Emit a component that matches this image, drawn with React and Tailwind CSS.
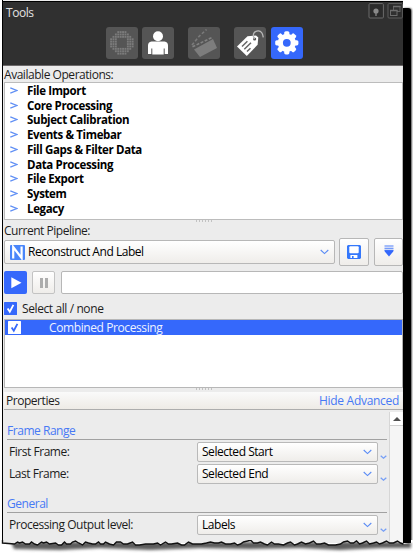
import React from "react";

const operations = [
  "File Import",
  "Core Processing",
  "Subject Calibration",
  "Events & Timebar",
  "Fill Gaps & Filter Data",
  "Data Processing",
  "File Export",
  "System",
  "Legacy",
];

function Chevron({ className = "" }) {
  return (
    <svg width="9" height="6" viewBox="0 0 9 6" className={className}>
      <path d="M0.7 1 L4.5 4.6 L8.3 1" fill="none" stroke="#5b8cf5" strokeWidth="1.1" />
    </svg>
  );
}

function Tool({ active, className = "", children }) {
  return (
    <div className={`h-[32px] w-[32px] rounded-[3px] ${active ? "bg-[#3568fb]" : "bg-[#555]"} ${className}`}>
      <svg width="32" height="32" viewBox="0 0 32 32">{children}</svg>
    </div>
  );
}

// Octagonal ring of small square dots
function RingIcon() {
  const steps = [-10.8, -8.4, -6, -3.6, -1.2, 1.2, 3.6, 6, 8.4, 10.8];
  const dots = [];
  for (const y of steps) {
    for (const x of steps) {
      if (Math.abs(x) + Math.abs(y) < 15 && Math.hypot(x, y) > 5.5) {
        dots.push(<rect key={`${x}:${y}`} x={x + 14.9} y={y + 14.9} width="1.9" height="1.9" />);
      }
    }
  }
  return <g fill="#7b7b7b">{dots}</g>;
}

function Grip() {
  return (
    <div className="flex h-[4px] items-start justify-center gap-[2px] pl-[2px]">
      {[0, 1, 2, 3, 4, 5].map((i) => (
        <span key={i} className="h-[2px] w-px bg-[#c2c2c2]" />
      ))}
    </div>
  );
}

function Check({ inverse }) {
  return (
    <svg width="13" height="13" viewBox="0 0 13 13" className="shrink-0">
      <rect width="13" height="13" rx="0.5" fill={inverse ? "#fff" : "#3568fb"} />
      <path d="M3.6 6.4 L5.8 9.7 L9.4 2.8" fill="none" stroke={inverse ? "#3568fb" : "#fff"} strokeWidth="1.8" />
    </svg>
  );
}

function Property({ label, value }) {
  return (
    <div className="flex h-[20px] pl-[2px]">
      <span className="w-[188px] pt-[2px] leading-[16px]">{label}</span>
      <div className="flex h-[20px] w-[181px] items-center justify-between rounded-[2px] border border-[#b9b9b9] bg-linear-to-b from-white to-[#efedea] pr-[5px] pl-[4px] text-black">
        <span>{value}</span>
        <Chevron />
      </div>
      <svg width="7" height="5" viewBox="0 0 7 5" className="mt-[13px] ml-[2px]">
        <path d="M0.7 0.8 L3.5 3.2 L6.3 0.8" fill="none" stroke="#759ef6" strokeWidth="1.3" />
      </svg>
    </div>
  );
}

const tornEdge =
  "L12 4 L15 2 L17 3 L20 2 L23 4 L27 4 L29 2 L32 4 L35 5 L39 2 L41 3 L44 2 L47 4 L53 3 L56 5 L59 5 L62 2 L64 4 L68 4 L70 2 L73 1 L76 3 L80 5 L83 2 L86 3 L90 4 L93 4 L96 2 L98 4 L101 4 L103 2 L107 4 L111 5 L114 2 L118 2 L121 4 L125 4 L130 2 L133 5 L137 5 L143 4 L151 4 L155 3 L158 5 L163 2 L166 4 L169 4 L175 3 L179 5 L182 5 L186 2 L190 4 L194 4 L199 4 L204 3 L208 2 L212 3 L216 3 L219 2 L223 4 L228 4 L232 3 L235 5 L238 4 L241 2 L245 1 L248 0 L251 3 L255 3 L258 2 L262 4 L265 5 L269 2 L272 4 L276 4 L281 5 L285 3 L288 2 L292 5 L295 4 L299 2 L303 4 L307 3 L311 1 L314 4 L318 4 L322 3 L326 5 L333 5 L338 4 L341 2 L345 1 L348 3 L351 3 L354 1 L357 4 L360 3 L364 1 L367 4 L371 3 L374 2 L377 4 L380 3 L384 1 L387 3 L391 3 L395 1 L398 3 L401 4";

export default function App() {
  return (
    <div className="relative h-[556px] w-[413px] overflow-hidden bg-white font-['Open_Sans','Noto_Sans',sans-serif] text-[12px] tracking-[-0.46px] whitespace-nowrap text-[#1d1d1d]">
      <div className="flex h-[543px]">
        <div className="ml-[2px] h-[543px] w-[401px] shrink-0 overflow-hidden border-l border-black bg-[#ececec]">
          <header className="mt-px h-[65px] border-t border-b border-t-black border-b-[#6c696a] bg-[#303030]">
            <div className="flex h-[25px] justify-between">
              <span className="pt-[2px] pl-[3px] leading-[17px] text-[#e2e2e2]">Tools</span>
              <div className="flex gap-[3px] pt-[1px]">
                <svg width="16" height="16" viewBox="0 0 16 16">
                  <rect x="1" y="0.6" width="14.4" height="14.4" rx="1" fill="#2b2b2b" stroke="#6b6b6b" />
                  <circle cx="8" cy="8" r="2.6" fill="#8a8a8a" />
                  <path d="M8 8 V13" stroke="#8a8a8a" strokeWidth="1.3" />
                </svg>
                <svg width="16" height="16" viewBox="0 0 16 16">
                  <rect x="1" y="0.6" width="14.4" height="14.4" rx="1" fill="#2b2b2b" stroke="#5d5d5d" />
                  <rect x="6.5" y="3.5" width="6.5" height="5" fill="#303030" stroke="#606060" />
                  <rect x="3.5" y="7.5" width="6.5" height="5" fill="#303030" stroke="#6d6d6d" />
                  <path d="M3 7.5h7.5M6 3.5h7.5" stroke="#6d6d6d" strokeWidth="1.4" />
                </svg>
              </div>
            </div>
            <div className="flex pl-[103px]">
              <Tool><RingIcon /></Tool>
              <Tool className="ml-[4px]">
                <g fill="#fff">
                  <circle cx="16" cy="9.3" r="5" />
                  <path d="M9.5 14.5 H22.5 Q26 15 26 18.5 V27 H22.7 V21.5 H21.7 V27.5 H10.3 V21.5 H9.3 V27 H6 V18.5 Q6 15 9.5 14.5Z" />
                </g>
              </Tool>
              <Tool className="ml-[14px]">
                <path d="M6 22.5 L25 12 L29 21 L12 30Z" fill="#7d7d7d" />
                <path d="M4.5 19.8 L24 10.5" stroke="#828282" strokeWidth="1.6" strokeDasharray="3 1.5" />
                <path d="M4 18 L11 9.5 L18.5 2.5" fill="none" stroke="#7b7b7b" strokeWidth="1.6" strokeDasharray="3 2" />
              </Tool>
              <Tool className="ml-[14px]">
                <path d="M3 19.5 L13.5 9.2 L22 8.6 L24.3 10.5 L23.6 17.8 L12.8 29Z" fill="#fff" />
                <circle cx="20.6" cy="12" r="1.6" fill="#555" />
                <path d="M8 19.5 L13.4 14.3 M10.3 22.2 L17 15.8 M13 24.5 L16.5 21.2" stroke="#666" strokeWidth="1.5" />
                <path d="M20.5 12 C17.5 7 21 3.5 24.5 3.8 C27 4 28.8 6.5 29.3 10.3" fill="none" stroke="#b9b9b9" strokeWidth="1.3" />
              </Tool>
              <Tool active className="ml-[5px]">
                <circle cx="15.8" cy="15.8" r="6.5" fill="none" stroke="#fff" strokeWidth="5.2" />
                {[0, 45, 90, 135, 180, 225, 270, 315].map((a) => (
                  <rect key={a} x="13.2" y="4.2" width="5.2" height="5" rx="1.6" fill="#fff" transform={`rotate(${a} 15.8 15.8)`} />
                ))}
              </Tool>
            </div>
          </header>

          <div className="h-[16px] pl-px leading-[18px]">Available Operations:</div>
          <div className="ml-px h-[138px] w-[399px] border border-[#bcbcbc] bg-white">
            {operations.map((name) => (
              <div key={name} className="flex h-[14.75px] items-center text-[11.5px] font-bold tracking-[-0.37px] text-black">
                <svg width="8" height="7" viewBox="0 0 8 7" className="mr-[9px] ml-[5px]">
                  <path d="M0.3 0.8 L6.8 3.5 L0.3 6.2" fill="none" stroke="#6190f5" strokeWidth="1.3" />
                </svg>
                {name}
              </div>
            ))}
          </div>
          <Grip />
          <div className="h-[14px] pl-px leading-[14px]">Current Pipeline:</div>
          <div className="flex h-[28px] items-center pl-px">
            <div className="flex h-[24px] w-[331px] items-center rounded-[2px] border border-[#b7b7b7] bg-linear-to-b from-white to-[#efedea] pr-[5px] pl-[5px] text-black">
              <svg width="15" height="15" viewBox="0 0 15 15" className="mr-[3px]">
                <rect width="15" height="15" rx="1" fill="#4a86fa" />
                <path d="M3.2 13.5 V2 L11.6 13 V1.5" fill="none" stroke="#fff" strokeWidth="2.2" />
              </svg>
              <span className="flex-1">Reconstruct And Label</span>
              <Chevron />
            </div>
            <div className="ml-[4px] flex h-[28px] w-[30px] items-center justify-center rounded-[2px] border border-[#b7b7b7] bg-linear-to-b from-white to-[#efedea]">
              <svg width="14" height="14" viewBox="0 0 14 14">
                <path d="M1 0H13L14 1V13L13 14H1L0 13V1Z" fill="#3578fb" />
                <rect x="2.3" y="1.2" width="9.4" height="7" rx="1" fill="#fff" />
                <rect x="3.4" y="10" width="7" height="3" fill="#fff" />
                <rect x="5" y="11" width="1.6" height="2" fill="#3578fb" />
              </svg>
            </div>
            <div className="ml-[5px] flex h-[28px] w-[29px] items-center justify-center rounded-[2px] border border-[#b7b7b7] bg-linear-to-b from-white to-[#efedea]">
              <svg width="10" height="12" viewBox="0 0 10 12" className="mb-[2px]">
                <path d="M0.5 1H9.5M0.5 3.2H9.5M0.5 5.4H9.5" stroke="#4a7cfa" strokeWidth="1.1" />
                <path d="M0.8 5.4H9.2V6.4L5 11.6L0.8 6.4Z" fill="#3568fb" />
              </svg>
            </div>
          </div>
          <div className="mt-[5px] flex h-[23px] pl-px">
            <div className="h-[23px] w-[23px] rounded-[2px] bg-[#3568fb]">
              <svg width="23" height="23" viewBox="0 0 23 23"><path d="M7.3 6.2 L17.5 11.7 L7.3 17.2Z" fill="#fff" /></svg>
            </div>
            <div className="ml-[5px] flex h-[23px] w-[23px] items-center justify-center gap-[2px] rounded-[2px] border border-[#c3c3c3] bg-linear-to-b from-white to-[#efedea]">
              <span className="h-[10px] w-[3px] bg-[#adadad]" />
              <span className="h-[10px] w-[3px] bg-[#adadad]" />
            </div>
            <div className="ml-[6px] h-[23px] w-[342px] rounded-[2px] border border-[#b7b7b7] bg-white" />
          </div>
          <div className="mt-[8px] flex h-[13px] items-center gap-[5px] pl-px">
            <Check />
            <span className="tracking-[-0.4px]">Select all / none</span>
          </div>
          <div className="mt-[4px] ml-px h-[69px] w-[399px] border border-[#b7b7b7] bg-white">
            <div className="flex h-[15px] items-center bg-[#3568fb] pl-[3px] text-[#eef3ff]">
              <Check inverse />
              <span className="ml-[28px] tracking-[-0.4px]">Combined Processing</span>
            </div>
          </div>
          <Grip />
          <div className="ml-px flex h-[18px] items-center justify-between border-b border-[#adadad] bg-linear-to-b from-[#fafafa] to-[#eeebe6] pr-[4px] pl-[2px]">
            <span>Properties</span>
            <span className="tracking-[-0.3px] text-[#4779f5]">Hide Advanced</span>
          </div>
          <div className="flex h-[134px]">
            <div className="w-[386px] pl-[4px]">
              <div className="mt-[13px] h-[17px] w-[380px] border-b border-[#a1a1a1] leading-[16px] text-[#4779f5]">Frame Range</div>
              <div className="mt-[2px]"><Property label="First Frame:" value="Selected Start" /></div>
              <div className="mt-[2px]"><Property label="Last Frame:" value="Selected End" /></div>
              <div className="mt-[11px] h-[18px] w-[380px] border-b border-[#a1a1a1] leading-[18px] text-[#4779f5]">General</div>
              <div className="mt-[2px]"><Property label="Processing Output level:" value="Labels" /></div>
            </div>
            <div className="mt-[2px] w-[14px] border-l border-[#d6d6d6] bg-[#f5f5f5]">
              <div className="flex h-[14px] items-center justify-center border-b border-[#d0d0d0] bg-white">
                <svg width="8" height="4" viewBox="0 0 8 4"><path d="M0 4L4 0L8 4Z" fill="#505050" /></svg>
              </div>
            </div>
          </div>
        </div>
        <div className="mt-[8px] h-[535px] w-[8px] rounded-tr-[3px] bg-black shadow-[1px_0_2px_#555]" />
      </div>
      <svg width="413" height="16" viewBox="0 0 413 16" className="absolute top-[540px] left-0">
        <defs>
          <filter id="soft" x="-5%" y="-50%" width="110%" height="200%"><feGaussianBlur stdDeviation="1.4" /></filter>
          <clipPath id="below"><path d={`M0 3 ${tornEdge} L413 2 V16 H0Z`} transform="translate(2 0)" /></clipPath>
        </defs>
        <path d={`M0 3 ${tornEdge} L401 0 L413 0 V16 H0Z`} transform="translate(2 0)" fill="#fff" />
        <path d="M403 0 H411 V3 H403Z" fill="#000" />
        <g clipPath="url(#below)">
          <path d="M11 2 H411 V8 L380 8 L340 10 L300 8 L250 9 L200 8 L150 10 L100 8 L60 10 L14 9Z" fill="#5c5c5c" filter="url(#soft)" />
        </g>
        <path d={`M0 0 L0 3 ${tornEdge}`} transform="translate(2.5 0)" fill="none" stroke="#111" strokeWidth="1.4" />
      </svg>
    </div>
  );
}
